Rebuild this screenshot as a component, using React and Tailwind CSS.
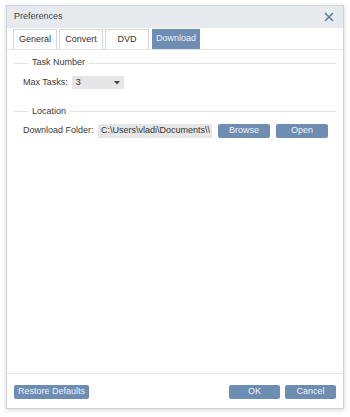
import React from 'react';

const font = { fontFamily: '"Liberation Sans", Arial, sans-serif' };

const Btn = ({ children, w }) => (
    <div className={`${w} h-[14px] rounded-[2px] bg-[#6e8db3] text-[#eef2f7] text-[9px] flex items-center justify-center`}>
        {children}
    </div>
);

const Section = ({ title, children }) => (
    <div className="flex flex-col">
        <div className="flex items-center h-[12px]">
            <div className="w-[14px] h-px bg-[#e3e3e3]" />
            <span className="px-[4px] text-[9px] text-[#3a3a3a]">{title}</span>
            <div className="flex-1 h-px bg-[#e3e3e3]" />
        </div>
        {children}
    </div>
);

const tabs = ['General', 'Convert', 'DVD', 'Download'];
const tabW = ['w-[44px]', 'w-[44px]', 'w-[44px]', 'w-[48px]'];

export default function App() {
    return (
        <div className="w-[350px] h-[417px] bg-white pt-[5px] pl-[6px]" style={font}>
            <div className="w-[338px] h-[404px] flex flex-col bg-white border border-[#cfd3d8] shadow-[0_1px_4px_rgba(0,0,0,0.18)]">
                <div className="h-[22px] bg-[#e6eaee] flex items-center justify-between pl-[7px] pr-[9px]">
                    <span className="text-[9px] text-[#444]">Preferences</span>
                    <svg width="10" height="10" viewBox="0 0 10 10">
                        <path d="M1 1 L9 9 M9 1 L1 9" stroke="#5f7f9f" strokeWidth="1.6" />
                    </svg>
                </div>
                <div className="h-[21px] flex items-end gap-[2px] pl-[6px] pt-[1px]">
                    {tabs.map((t, i) => (
                        <div
                            key={t}
                            className={`${tabW[i]} h-[20px] flex items-center justify-center text-[9px] ${
                                t === 'Download'
                                    ? 'bg-[#6e8db3] text-[#e8eef5] ml-[1px]'
                                    : 'border border-b-0 border-[#d6d6d6] text-[#333] bg-white'
                            }`}
                        >
                            {t}
                        </div>
                    ))}
                </div>
                <div className="flex-1 border-t border-b border-[#e6e6e6] px-[7px] pt-[7px] flex flex-col">
                    <Section title="Task Number">
                        <div className="flex items-center mt-[7px] pl-[9px] gap-[4px]">
                            <span className="text-[9px] text-[#3a3a3a]">Max Tasks:</span>
                            <div className="w-[52px] h-[13px] bg-[#e6e6e6] rounded-[1px] flex items-center justify-between px-[4px]">
                                <span className="text-[9px] text-[#333]">3</span>
                                <svg width="6" height="4" viewBox="0 0 6 4">
                                    <path d="M0 0 L6 0 L3 3.5 Z" fill="#444" />
                                </svg>
                            </div>
                        </div>
                    </Section>
                    <div className="mt-[16px]">
                        <Section title="Location">
                            <div className="flex items-center mt-[6px] pl-[9px]">
                                <span className="text-[9px] text-[#3a3a3a] w-[75px]">Download Folder:</span>
                                <div className="w-[114px] h-[14px] bg-[#e6e6e6] rounded-[1px] flex items-center pl-[3px] overflow-hidden">
                                    <span className="text-[9px] text-[#333] whitespace-nowrap">C:\Users\vladi\Documents\\</span>
                                </div>
                                <div className="flex gap-[6px] ml-[6px]">
                                    <Btn w="w-[52px]">Browse</Btn>
                                    <Btn w="w-[52px]">Open</Btn>
                                </div>
                            </div>
                        </Section>
                    </div>
                </div>
                <div className="h-[34px] flex items-center justify-between px-[7px] pt-[1px]">
                    <Btn w="w-[75px]">Restore Defaults</Btn>
                    <div className="flex gap-[5px]">
                        <Btn w="w-[51px]">OK</Btn>
                        <Btn w="w-[51px]">Cancel</Btn>
                    </div>
                </div>
            </div>
        </div>
    );
}
